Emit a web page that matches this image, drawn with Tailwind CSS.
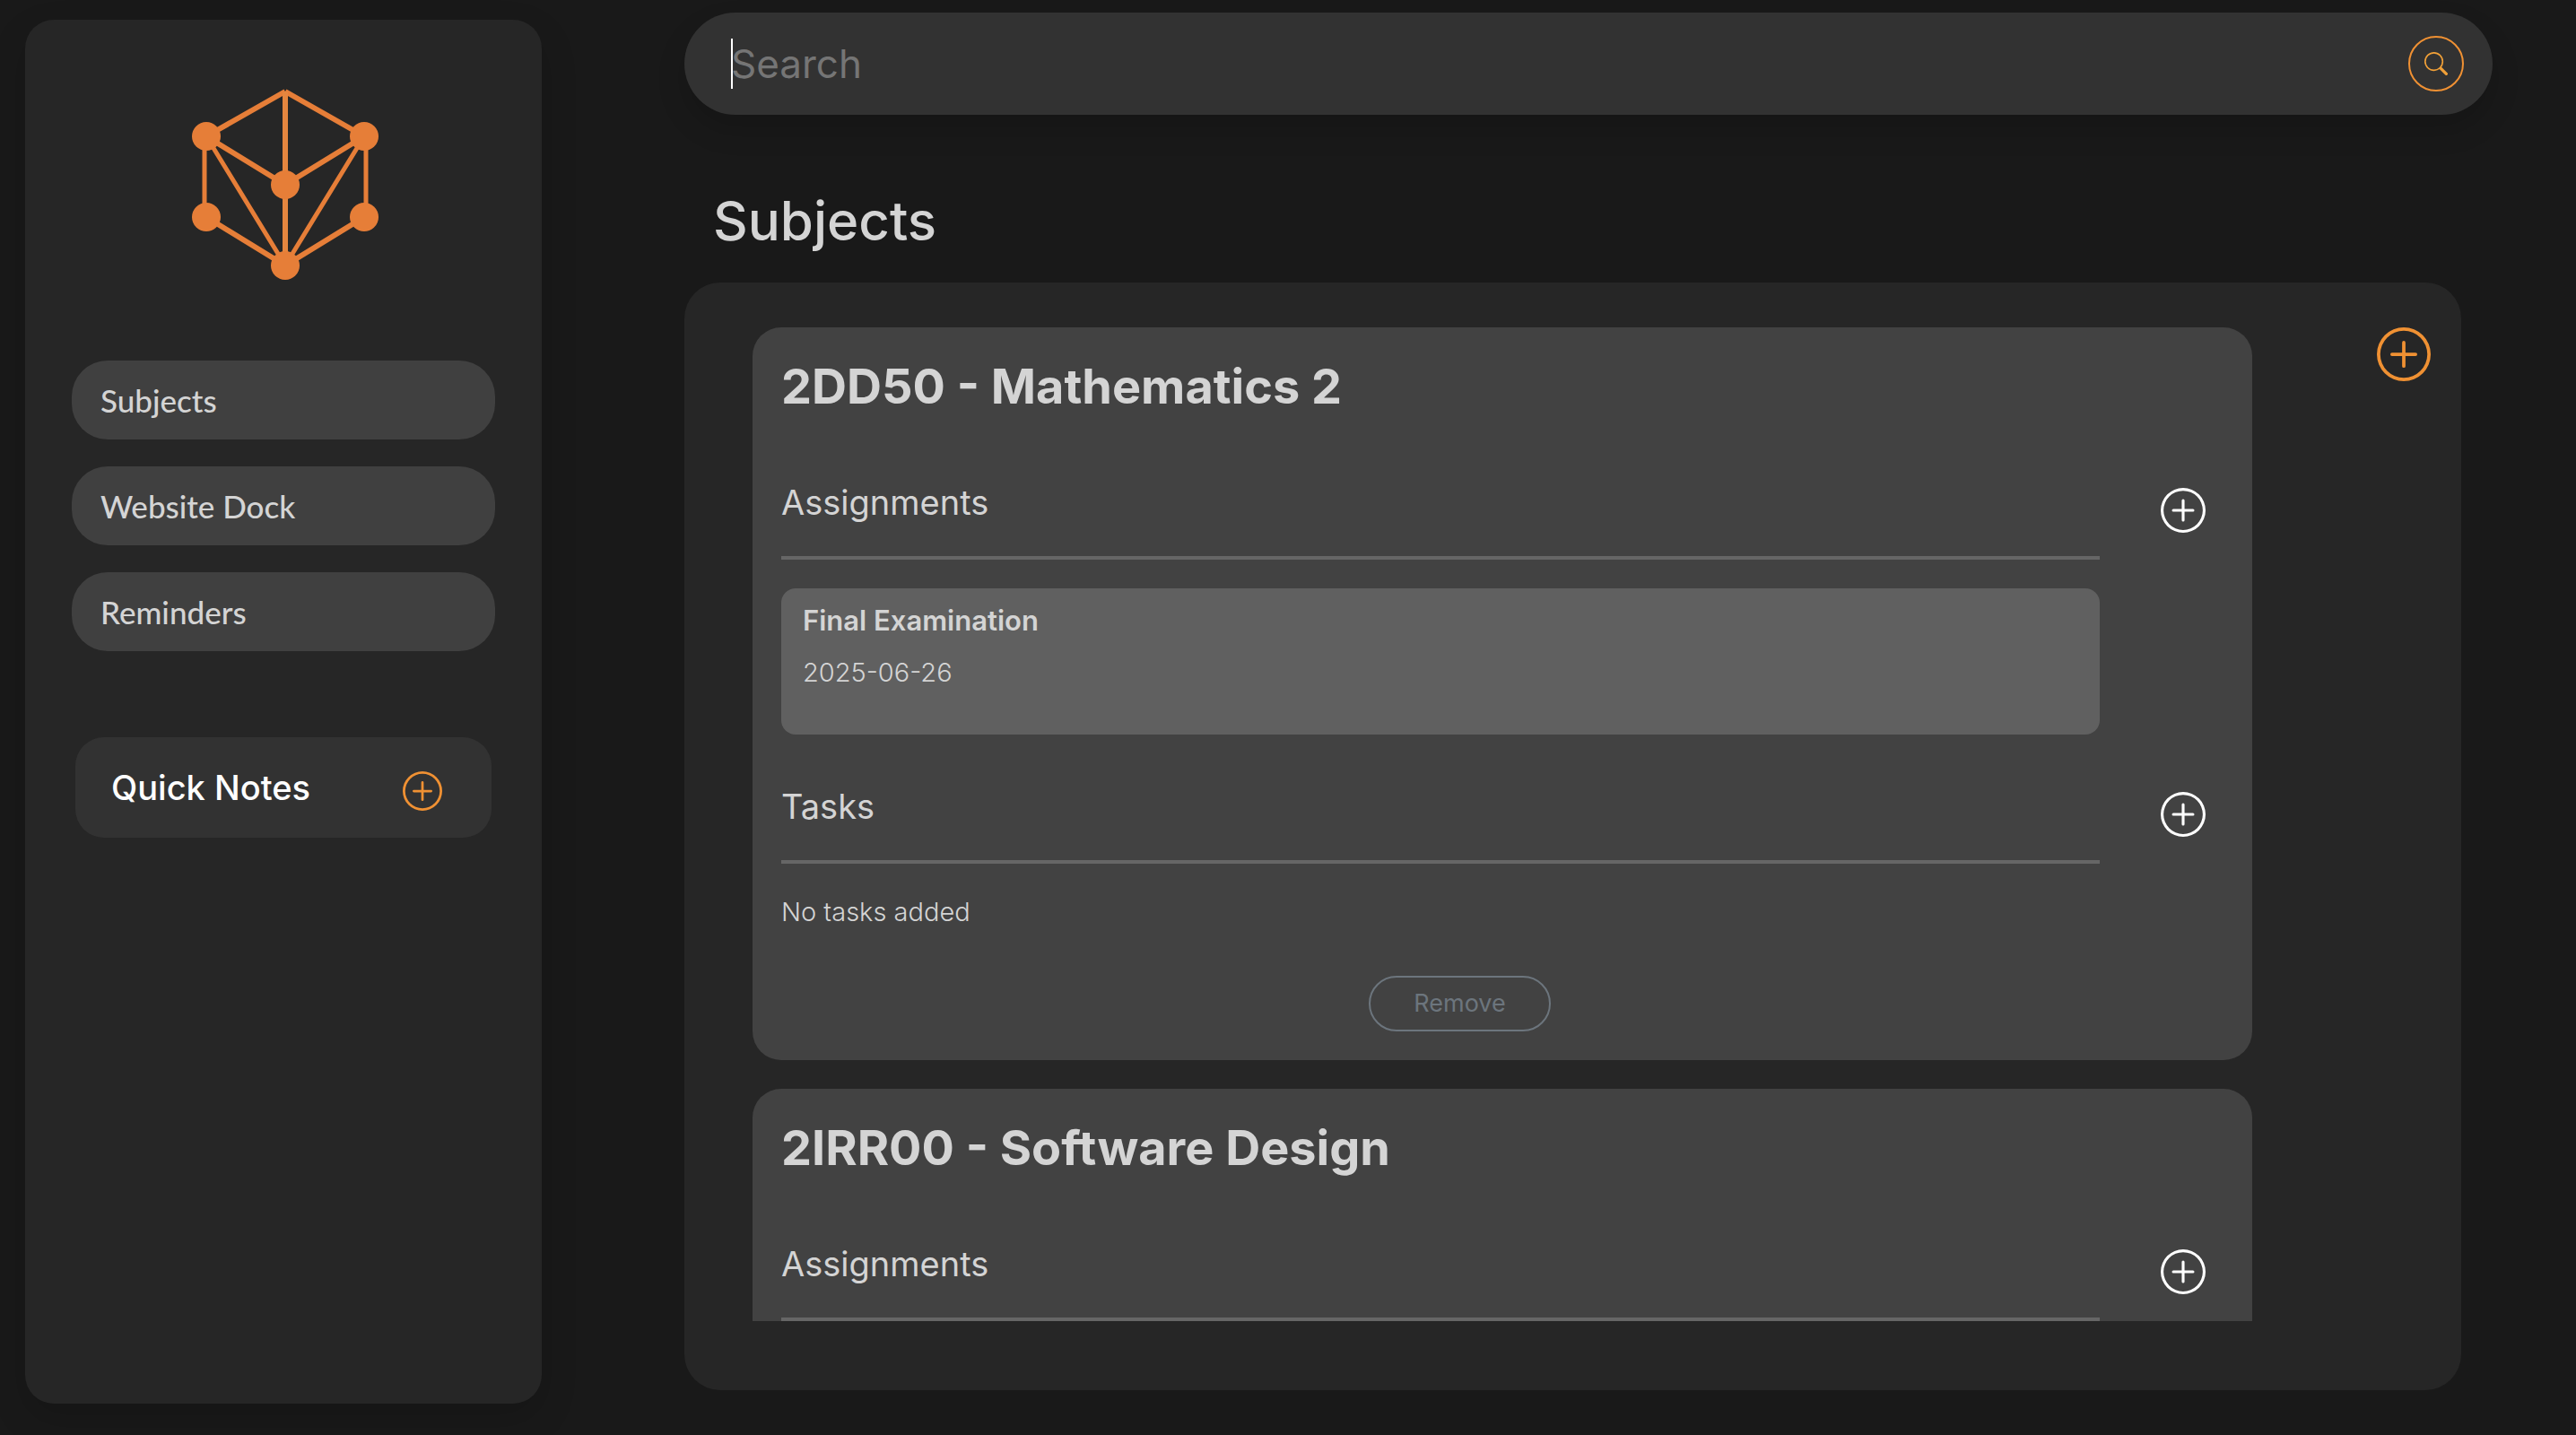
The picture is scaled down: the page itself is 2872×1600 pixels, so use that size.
<!DOCTYPE html>
<html lang="en">
<head>
<meta charset="utf-8">
<title>Subjects</title>
<script src="https://cdn.jsdelivr.net/npm/@tailwindcss/browser@4"></script>
</head>
<body class="flex h-screen overflow-hidden bg-[#191919] font-['Inter',sans-serif] text-[#d4d4d4]">
<svg class="hidden">
  <symbol id="plus" viewBox="0 0 16 16">
    <path d="M8 15A7 7 0 1 1 8 1a7 7 0 0 1 0 14m0 1A8 8 0 1 0 8 0a8 8 0 0 0 0 16"/>
    <path d="M8 4a.5.5 0 0 1 .5.5v3h3a.5.5 0 0 1 0 1h-3v3a.5.5 0 0 1-1 0v-3h-3a.5.5 0 0 1 0-1h3v-3A.5.5 0 0 1 8 4"/>
  </symbol>
</svg>

<aside class="mt-[22px] mb-[35px] ml-7 flex w-[576px] shrink-0 flex-col rounded-4xl bg-[#262626] px-[52px] pt-[76px] shadow-[0_16px_40px_rgba(0,0,0,0.15)]">
  <svg class="ml-[132px] h-[216px] w-[212px]" viewBox="0 0 212 216" fill="none" stroke="#e67e38" stroke-width="6">
    <path d="M106 4 18 54M106 4l88 50M18 54l88 54 88-54M18 144l88 54 88-54"/>
    <path stroke="#e5863f" d="M106 4v194"/>
    <path stroke-width="5" d="M16 54v90M196 54v90M18 54l88 144 88-144"/>
    <g fill="#e67e38" stroke="none">
      <circle cx="18" cy="54" r="16"/><circle cx="194" cy="54" r="16"/><circle cx="106" cy="108" r="16"/>
      <circle cx="18" cy="144" r="16"/><circle cx="194" cy="144" r="16"/><circle cx="106" cy="198" r="16"/>
    </g>
  </svg>
  <nav class="mt-[88px] flex flex-col gap-[30px] font-['Lato',sans-serif] text-[35px] leading-[88px] font-medium">
    <a href="#subjects" class="h-[88px] rounded-[40px] bg-[#404040] px-8">Subjects</a>
    <a href="#dock" class="h-[88px] rounded-[40px] bg-[#404040] px-8">Website Dock</a>
    <a href="#reminders" class="h-[88px] rounded-[40px] bg-[#404040] px-8">Reminders</a>
  </nav>
  <section class="mx-1 mt-24 flex h-28 items-center justify-between rounded-4xl bg-[#323232] pr-[55px] pl-10">
    <h2 class="text-[38px] leading-[48px] font-medium text-white">Quick Notes</h2>
    <button aria-label="Add note" class="mt-2 text-[#f09133]"><svg class="size-11 fill-current"><use href="#plus"/></svg></button>
  </section>
</aside>

<main class="ml-[159px] flex min-w-0 flex-1 flex-col pt-3.5 pr-[93px] pb-[50px]">
  <form class="relative flex h-[114px] shrink-0 items-center rounded-full bg-[#323232] pr-8 pl-[52px] shadow-[0_16px_32px_rgba(0,0,0,0.15)]">
    <span class="absolute left-[52px] h-14 w-0.5 bg-white"></span>
    <input type="text" aria-label="Search" placeholder="Search" class="min-w-0 flex-1 bg-transparent text-[44px] leading-[56px] outline-none placeholder:text-[#757575]">
    <button type="button" aria-label="Search" class="flex size-[62px] items-center justify-center rounded-full border-2 border-[#f09133] text-[#f0a038]">
      <svg class="size-[26px] fill-current" viewBox="0 0 16 16"><path d="M11.742 10.344a6.500 6.500 0 1 0-1.397 1.398h-.001q.044.060.098.115l3.850 3.850a1 1 0 0 0 1.415-1.414l-3.850-3.850a1 1 0 0 0-.115-.100zM12 6.500a5.500 5.500 0 1 1-11 0 5.500 5.500 0 0 1 11 0"/></svg>
    </button>
  </form>

  <h1 class="mt-[78px] pl-8 text-[60px] leading-[80px] font-medium">Subjects</h1>

  <div id="subjects" class="mt-[29px] mr-[35px] flex min-h-0 flex-1 items-start rounded-[40px] bg-[#262626] pt-[50px] pr-[34px] pb-[77px] pl-[76px]">
    <div class="flex h-full min-w-0 flex-1 flex-col gap-8 overflow-y-auto [scrollbar-width:none]">
      <article class="shrink-0 rounded-4xl bg-[#424242] p-8">
        <h2 class="text-[54px] leading-[68px] font-bold">2DD50 - Mathematics 2</h2>
        <section class="mt-[69px] flex items-start gap-[68px] pr-5">
          <div class="flex-1">
            <h3 class="border-b-4 border-[#666] pt-0.5 pb-9 text-[38px] leading-[48px]">Assignments</h3>
            <div class="mt-8 rounded-2xl bg-[#606060] px-6 pt-3.5 pb-[47px]">
              <h4 class="text-[31px] leading-[44px] font-semibold">Final Examination</h4>
              <p class="mt-3.5 text-[29px] leading-[44px] font-light">2025-06-26</p>
            </div>
          </div>
          <button aria-label="Add assignment" class="mt-2.5 text-white"><svg class="size-[50px] fill-current"><use href="#plus"/></svg></button>
        </section>
        <section class="mt-[54px] flex items-start gap-[68px] pr-5">
          <div class="flex-1">
            <h3 class="border-b-4 border-[#666] pt-0.5 pb-9 text-[38px] leading-[48px]">Tasks</h3>
            <p class="mt-8 text-[29px] leading-[44px] font-light">No tasks added</p>
          </div>
          <button aria-label="Add task" class="mt-2.5 text-white"><svg class="size-[50px] fill-current"><use href="#plus"/></svg></button>
        </section>
        <div class="mt-[49px] flex justify-center pr-[95px]">
          <button class="h-[62px] rounded-full border-2 border-[#6c757d] px-12 text-[27px] leading-[40px] text-[#6c757d]">Remove</button>
        </div>
      </article>

      <article class="shrink-0 rounded-4xl bg-[#424242] p-8">
        <h2 class="text-[54px] leading-[68px] font-bold">2IRR00 - Software Design</h2>
        <section class="mt-[69px] flex items-start gap-[68px] pr-5">
          <div class="flex-1">
            <h3 class="border-b-4 border-[#666] pt-0.5 pb-9 text-[38px] leading-[48px]">Assignments</h3>
          </div>
          <button aria-label="Add assignment" class="mt-2.5 text-white"><svg class="size-[50px] fill-current"><use href="#plus"/></svg></button>
        </section>
      </article>
    </div>
    <button aria-label="Add subject" class="ml-[139px] text-[#f09133]"><svg class="size-[60px] fill-current"><use href="#plus"/></svg></button>
  </div>
</main>
</body>
</html>
